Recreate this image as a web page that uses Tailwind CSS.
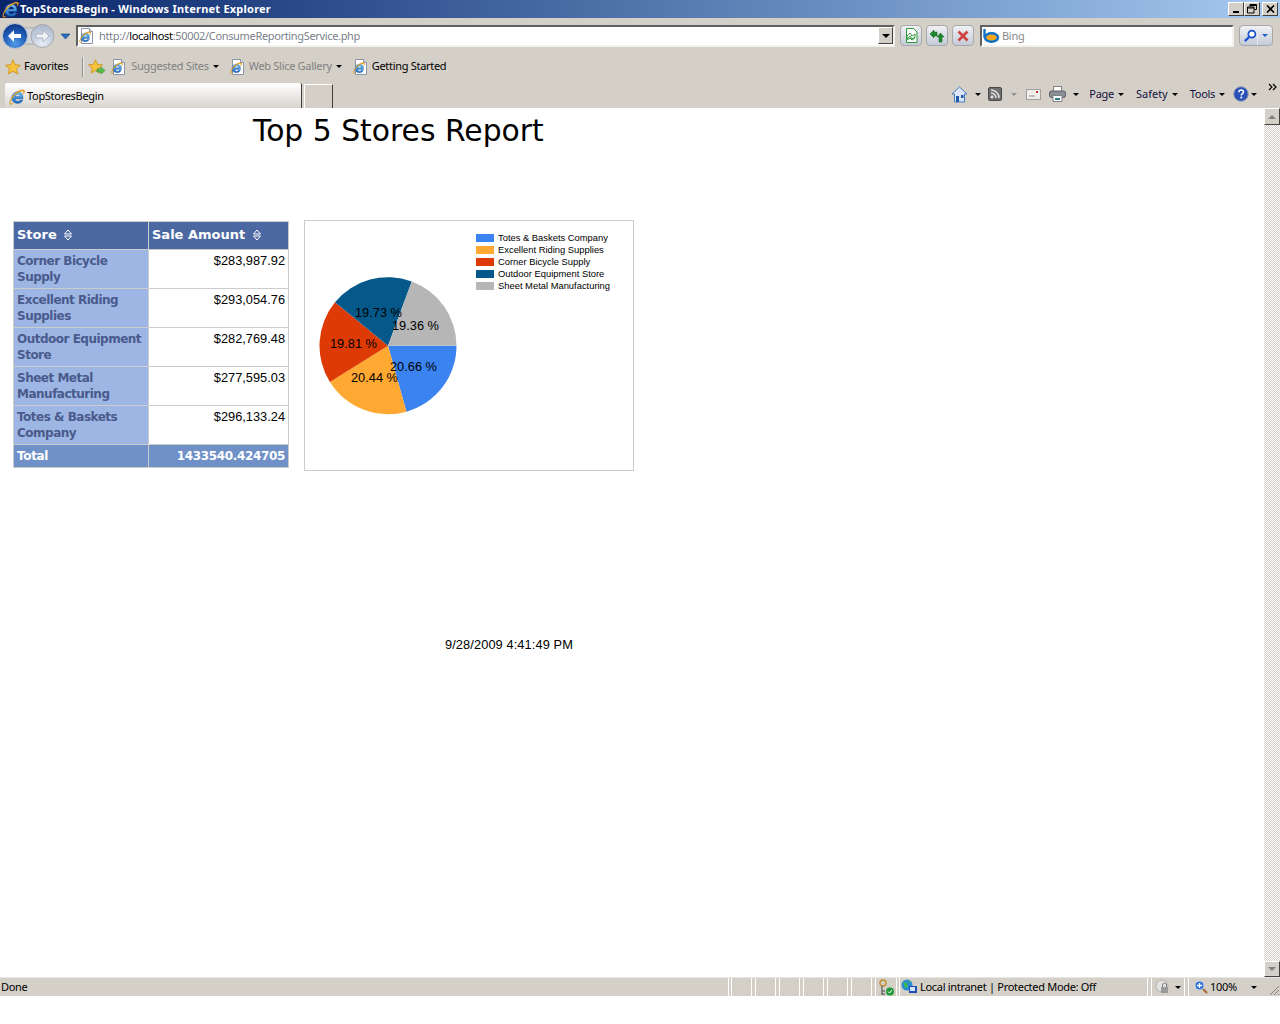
<!DOCTYPE html>
<html><head><meta charset="utf-8"><title>TopStoresBegin</title>
<script src="https://cdn.jsdelivr.net/npm/@tailwindcss/browser@4"></script></head>
<body class="m-0 bg-white overflow-hidden">
<svg class="absolute w-0 h-0" width="0" height="0"><defs>
<linearGradient id="iebl" x1="0" y1="0" x2="0" y2="1"><stop offset="0" stop-color="#7cc4f4"/><stop offset="1" stop-color="#1766c0"/></linearGradient>
<symbol id="ie" viewBox="0 0 16 16">
<path d="M2.800 9.200C2.800 5.400 5.300 2.800 8.700 2.800c3.300 0 5.300 2.500 5.300 5.800v1.300H6.300c.1 1.500 1.200 2.400 2.600 2.400 1 0 1.800-.4 2.200-1.200h2.700c-.7 2-2.500 3.300-4.900 3.300-3.600 0-6.100-2.200-6.100-5.200zM6.400 7.600h4.700c-.1-1.300-1-2.300-2.300-2.300-1.300 0-2.200 1-2.400 2.300z" fill="url(#iebl)" stroke="#0f4a96" stroke-width=".4"/>
<path d="M1 15.300C-.6 13 3.500 5.300 9 2.300c3-1.600 5.900-2 6.600-.7.500.9-.2 2.400-1.500 3.900.4-1.400.6-2.400.1-2.900C13 1.500 9 3 5.800 6.300 2.500 9.600.7 13.500 1.800 14.500c.6.400 1.600.2 2.900-.6-1.500 1.300-3 1.900-3.700 1.400z" fill="#eaa41e" stroke="#b87a10" stroke-width=".2"/>
</symbol>
<symbol id="doc" viewBox="0 0 16 16">
<path d="M2.500.5h8l3 3v12h-11z" fill="#fff" stroke="#8a93a8"/><path d="M10.500.5v3h3" fill="#e4e8f0" stroke="#8a93a8"/>
<use href="#ie" x="0" y="3" width="12" height="12"/>
</symbol>
<symbol id="star" viewBox="0 0 16 16"><path d="M8 .8l2.200 4.900 5.300.6-4 3.500 1.200 5.200L8 12.300 3.300 15l1.200-5.200-4-3.500 5.300-.6z" fill="#f7c33c" stroke="#c98a1a" stroke-width=".8"/></symbol>
<radialGradient id="back" cx=".5" cy=".8" r=".85"><stop offset="0" stop-color="#4f9be8"/><stop offset=".6" stop-color="#1c56b0"/><stop offset="1" stop-color="#0d2f78"/></radialGradient>
<radialGradient id="fwd" cx=".5" cy=".8" r=".85"><stop offset="0" stop-color="#e8eef7"/><stop offset="1" stop-color="#a4b2c9"/></radialGradient>
</defs></svg>

<div class="flex flex-col h-[1024px] w-[1280px] text-[11px] tracking-[-0.3px] text-black [font-family:'Noto_Sans',sans-serif]">
  <!-- title bar -->
  <div class="h-[18px] flex items-center bg-gradient-to-r from-[#0a246a] to-[#a6caf0] pl-[2px] pr-[2px] shrink-0">
    <svg class="w-[17px] h-[17px] shrink-0"><use href="#ie"/></svg>
    <span class="ml-[1px] text-white font-bold text-[11px] tracking-[0.22px]">TopStoresBegin - Windows Internet Explorer</span>
    <div class="ml-auto flex items-center">
      <div class="w-[16px] h-[14px] bg-[#d4d0c8] border border-t-white border-l-white border-r-[#404040] border-b-[#404040] flex items-end justify-center pb-[2px]"><div class="w-[6px] h-[2px] bg-black"></div></div>
      <div class="w-[16px] h-[14px] bg-[#d4d0c8] border border-t-white border-l-white border-r-[#404040] border-b-[#404040] flex items-center justify-center"><svg width="10" height="10" viewBox="0 0 10 10"><path d="M3 .5h6.500v5H7.500M3 .5v2M3 1.500h6.500M.5 3h6.500v6H.5zM.5 4h6.500" fill="none" stroke="#000"/></svg></div>
      <div class="ml-[2px] w-[16px] h-[14px] bg-[#d4d0c8] border border-t-white border-l-white border-r-[#404040] border-b-[#404040] flex items-center justify-center"><svg width="9" height="8" viewBox="0 0 9 8"><path d="M1 .5l7 7M8 .5l-7 7" stroke="#000" stroke-width="1.600"/></svg></div>
    </div>
  </div>

  <!-- address row -->
  <div class="h-[32px] bg-[#d4d0c8] flex items-center shrink-0 pt-[3px]">
    <svg class="ml-[2px] shrink-0" width="72" height="28" viewBox="0 0 72 28">
      <rect x="14" y="6" width="28" height="16" fill="#d0d4dc" stroke="#a8a8a8"/>
      <circle cx="13" cy="14" r="12.500" fill="url(#back)" stroke="#c0c8d8"/>
      <path d="M6 14l6-6v4h7v4h-7v4z" fill="#fff"/>
      <circle cx="40.500" cy="14" r="11.500" fill="url(#fwd)" stroke="#a8a8a8"/>
      <path d="M47 14l-6-6v4h-7v4h7v4z" fill="#eef1f6" stroke="#8b96ab" stroke-width=".6"/>
      <path d="M59 12h9l-4.500 5z" fill="#2a6ac0" stroke="#123f80" stroke-width=".6"/>
    </svg>
    <div class="ml-[2px] w-[819px] h-[22px] bg-white border-2 border-t-[#606060] border-l-[#606060] border-r-[#f4f2ee] border-b-[#f4f2ee] flex items-center">
      <svg class="ml-[1px] w-4 h-4 shrink-0"><use href="#doc"/></svg>
      <span class="ml-[4px] pt-[1px] text-[#7a7f8c] tracking-[-0.34px]">http://<span class="text-black">localhost</span>:50002/ConsumeReportingService.php</span>
      <div class="ml-auto w-[15px] h-[17px] bg-[#d4d0c8] border border-t-white border-l-white border-r-[#404040] border-b-[#404040] flex items-center justify-center"><div class="border-x-[4px] border-x-transparent border-t-[4px] border-t-black"></div></div>
    </div>
    <div class="ml-[5px] w-[22px] h-[21px] rounded-[4px] border border-[#a8a8a8] bg-gradient-to-b from-[#f0f1f4] to-[#c4cbd8] flex items-center justify-center">
      <svg width="13" height="15" viewBox="0 0 13 15"><path d="M1.500.5h7l3.500 3.500v10.500H1.500z" fill="#fff" stroke="#2f9a3c"/><path d="M2 8l3-3 2 3 3-2v3l-3 2-2-3-3 3zM2 12l3-2 2 2 3-2" fill="none" stroke="#2f9a3c"/></svg>
    </div>
    <div class="ml-[4px] w-[22px] h-[21px] rounded-[4px] border border-[#a8a8a8] bg-gradient-to-b from-[#f0f1f4] to-[#c4cbd8] flex items-center justify-center">
      <svg width="16" height="14" viewBox="0 0 16 14"><path d="M1 5l4-4v2h3v4H5v2zM15 8l-3.500-4L8 8h2v5h3V8z" fill="#1f8a2e" stroke="#0f5c1a" stroke-width=".5"/></svg>
    </div>
    <div class="ml-[4px] w-[22px] h-[21px] rounded-[4px] border border-[#a8a8a8] bg-gradient-to-b from-[#f0f1f4] to-[#c4cbd8] flex items-center justify-center">
      <svg width="12" height="12" viewBox="0 0 12 12"><path d="M1.500 1.500l9 9M10.500 1.500l-9 9" stroke="#d0403c" stroke-width="2.600"/></svg>
    </div>
    <div class="ml-[6px] w-[254px] h-[22px] bg-white border-2 border-t-[#606060] border-l-[#606060] border-r-[#f4f2ee] border-b-[#f4f2ee] flex items-center">
      <svg class="ml-[1px] shrink-0" width="17" height="14" viewBox="0 0 17 14"><path d="M1.500 0v9" stroke="#0f72c8" stroke-width="2.400"/><ellipse cx="8.500" cy="8.500" rx="6.500" ry="4.300" fill="#f7a51c" stroke="#0f72c8" stroke-width="2.400"/></svg>
      <span class="ml-[2px] pt-[1px] text-[#8a8a8a]">Bing</span>
    </div>
    <div class="ml-[5px] w-[34px] h-[21px] rounded-[4px] border border-[#a8a8a8] bg-gradient-to-b from-[#f0f1f4] to-[#c4cbd8] flex items-center">
      <svg class="ml-[3px]" width="15" height="14" viewBox="0 0 15 14"><circle cx="9.500" cy="5" r="3.800" fill="#fff" stroke="#1a50d0" stroke-width="1.800"/><path d="M6.500 8L2 12.500" stroke="#1a50d0" stroke-width="2.400"/></svg>
      <div class="ml-auto mr-[4px] pl-[4px] border-l border-[#e8eaef] h-full flex items-center"><div class="border-x-[3px] border-x-transparent border-t-[3px] border-t-[#2060c8]"></div></div>
    </div>
  </div>

  <!-- favorites row -->
  <div class="h-[30px] bg-[#d4d0c8] flex items-center shrink-0 pl-[5px] pt-[3px]">
    <svg class="w-4 h-4 shrink-0"><use href="#star"/></svg>
    <span class="ml-[3px]">Favorites</span>
    <div class="ml-[14px] w-[2px] h-[20px] border-l border-[#909090] bg-white/60"></div>
    <svg class="ml-[4px] shrink-0" width="18" height="16" viewBox="0 0 18 16"><use href="#star" width="15" height="15" x="0" y="0"/><path d="M9 10h4V8l4 3.500L13 15v-2H9z" fill="#5cc04c" stroke="#2e8a2a" stroke-width=".6"/></svg>
    <svg class="ml-[5px] w-4 h-4 shrink-0"><use href="#doc"/></svg>
    <span class="ml-[4px] text-[#808080]">Suggested Sites</span>
    <div class="ml-[4px] border-x-[3px] border-x-transparent border-t-[3px] border-t-black"></div>
    <svg class="ml-[11px] w-4 h-4 shrink-0"><use href="#doc"/></svg>
    <span class="ml-[3px] text-[#808080]">Web Slice Gallery</span>
    <div class="ml-[4px] border-x-[3px] border-x-transparent border-t-[3px] border-t-black"></div>
    <svg class="ml-[11px] w-4 h-4 shrink-0"><use href="#doc"/></svg>
    <span class="ml-[3px]">Getting Started</span>
  </div>

  <!-- tab row -->
  <div class="h-[28px] bg-[#d4d0c8] flex items-end shrink-0 pl-[5px] relative">
    <div class="w-[297px] h-[25px] bg-gradient-to-b from-white to-[#d8d5ce] rounded-t-[2px] flex items-center pl-[4px] pt-[2px] border-r border-[#404040]">
      <svg class="w-4 h-4 shrink-0"><use href="#ie"/></svg>
      <span class="ml-[2px]">TopStoresBegin</span>
    </div>
    <div class="ml-[2px] w-[29px] h-[24px] border-t border-l border-white border-r border-r-[#404040]"></div>
    <div class="ml-auto self-start flex items-center h-[24px] mt-[2px] pr-[23px] text-[#101040]">
      <svg width="17" height="17" viewBox="0 0 17 17"><path d="M8.500 1L1 8h2.500v8h10V8H16z" fill="#dbe6f5" stroke="#4a7cc0"/><path d="M5 10h3v6H5z" fill="#1f5aa8"/><path d="M10 9h2.500v3H10z" fill="#1f5aa8"/></svg>
      <div class="ml-[7px] border-x-[3px] border-x-transparent border-t-[3px] border-t-black"></div>
      <svg class="ml-[7px]" width="14" height="14" viewBox="0 0 14 14"><rect x=".5" y=".5" width="13" height="13" rx="1.500" fill="#6e6e6e" stroke="#4a4a4a"/><circle cx="4" cy="10" r="1.400" fill="#e8e8e8"/><path d="M3 6a5 5 0 015 5M3 3a8 8 0 018 8" fill="none" stroke="#e8e8e8" stroke-width="1.400"/></svg>
      <div class="ml-[9px] border-x-[3px] border-x-transparent border-t-[3px] border-t-[#909090]"></div>
      <svg class="ml-[9px]" width="15" height="11" viewBox="0 0 15 11"><rect x=".5" y=".5" width="14" height="10" fill="#f0eeea" stroke="#a0a0a0"/><path d="M3 7h6" stroke="#909090"/><rect x="10" y="2" width="2" height="2" fill="#d03030"/></svg>
      <svg class="ml-[8px]" width="17" height="16" viewBox="0 0 17 16"><path d="M4.500 5V.5h8V5" fill="#fff" stroke="#808080"/><rect x=".5" y="5" width="16" height="6.500" rx="2" fill="#8a8f96" stroke="#5a5f66"/><path d="M4 9.500h9v6H4z" fill="#fff" stroke="#808080"/><rect x="6" y="12" width="5" height="2" fill="#2a7a8a"/></svg>
      <div class="ml-[7px] border-x-[3px] border-x-transparent border-t-[3px] border-t-black"></div>
      <span class="ml-[10px]">Page</span>
      <div class="ml-[4px] border-x-[3px] border-x-transparent border-t-[3px] border-t-black"></div>
      <span class="ml-[12px] tracking-normal">Safety</span>
      <div class="ml-[4px] border-x-[3px] border-x-transparent border-t-[3px] border-t-black"></div>
      <span class="ml-[12px]">Tools</span>
      <div class="ml-[4px] border-x-[3px] border-x-transparent border-t-[3px] border-t-black"></div>
      <svg class="ml-[8px]" width="16" height="16" viewBox="0 0 16 16"><circle cx="8" cy="8" r="7.300" fill="#2850b8" stroke="#9aa0b0"/><path d="M5.800 6.200C5.900 4.800 6.900 4 8.200 4c1.300 0 2.300.8 2.300 2 0 1.700-2.200 1.700-2.200 3.400" fill="none" stroke="#fff" stroke-width="1.500"/><rect x="7.400" y="10.600" width="1.800" height="1.800" fill="#fff"/></svg>
      <div class="ml-[2px] border-x-[3px] border-x-transparent border-t-[3px] border-t-black"></div>
    </div>
    <svg class="absolute right-[3px] top-[3px]" width="9" height="8" viewBox="0 0 9 8"><path d="M1 1l3 3-3 3M5 1l3 3-3 3" fill="none" stroke="#000" stroke-width="1.200"/></svg>
  </div>

  <!-- content + scrollbar -->
  <div class="flex-1 min-h-0 flex tracking-normal">
    <main class="flex-1 min-w-0 bg-white">
      <h1 class="ml-[253px] mt-[3px] text-[29.8px] leading-[40px] font-normal [font-family:'DejaVu_Sans',sans-serif]">Top 5 Stores Report</h1>
      <div class="mt-[70px] ml-[13px] flex items-start">
        <table class="border-collapse w-[276px] [font-family:'Liberation_Sans',sans-serif] text-[12.8px]">
          <thead>
            <tr class="h-[28px] bg-[#4c68a3] text-white text-[13px] font-bold [font-family:'DejaVu_Sans',sans-serif]">
              <th class="w-[135px] border border-[#cccccc] text-left font-bold px-[3px] pb-[2px]">Store <svg class="inline -mt-[1px] ml-[3px]" width="8" height="12" viewBox="0 0 8 12"><path d="M.5 5L4 1l3.500 4zM.5 7L4 11l3.500-4z" fill="none" stroke="#fff"/></svg></th>
              <th class="border border-[#cccccc] text-left font-bold px-[3px] pb-[2px]">Sale Amount <svg class="inline -mt-[1px] ml-[3px]" width="8" height="12" viewBox="0 0 8 12"><path d="M.5 5L4 1l3.500 4zM.5 7L4 11l3.500-4z" fill="none" stroke="#fff"/></svg></th>
            </tr>
          </thead>
          <tbody>
            <tr class="h-[39px]"><td class="border border-[#cccccc] bg-[#9db6e3] text-[#4a5a8c] font-bold text-[12px] tracking-[-0.5px] leading-[16px] px-[3px] align-top pt-[3px] [font-family:'DejaVu_Sans',sans-serif]">Corner Bicycle Supply</td><td class="border border-[#cccccc] text-right align-top px-[3px] pt-[1px]">$283,987.92</td></tr>
            <tr class="h-[39px]"><td class="border border-[#cccccc] bg-[#9db6e3] text-[#4a5a8c] font-bold text-[12px] tracking-[-0.5px] leading-[16px] px-[3px] align-top pt-[3px] [font-family:'DejaVu_Sans',sans-serif]">Excellent Riding Supplies</td><td class="border border-[#cccccc] text-right align-top px-[3px] pt-[1px]">$293,054.76</td></tr>
            <tr class="h-[39px]"><td class="border border-[#cccccc] bg-[#9db6e3] text-[#4a5a8c] font-bold text-[12px] tracking-[-0.5px] leading-[16px] px-[3px] align-top pt-[3px] [font-family:'DejaVu_Sans',sans-serif]">Outdoor Equipment Store</td><td class="border border-[#cccccc] text-right align-top px-[3px] pt-[1px]">$282,769.48</td></tr>
            <tr class="h-[39px]"><td class="border border-[#cccccc] bg-[#9db6e3] text-[#4a5a8c] font-bold text-[12px] tracking-[-0.5px] leading-[16px] px-[3px] align-top pt-[3px] [font-family:'DejaVu_Sans',sans-serif]">Sheet Metal Manufacturing</td><td class="border border-[#cccccc] text-right align-top px-[3px] pt-[1px]">$277,595.03</td></tr>
            <tr class="h-[39px]"><td class="border border-[#cccccc] bg-[#9db6e3] text-[#4a5a8c] font-bold text-[12px] tracking-[-0.5px] leading-[16px] px-[3px] align-top pt-[3px] [font-family:'DejaVu_Sans',sans-serif]">Totes &amp; Baskets Company</td><td class="border border-[#cccccc] text-right align-top px-[3px] pt-[1px]">$296,133.24</td></tr>
            <tr class="h-[23px] bg-[#7090c8] text-white font-bold text-[12px] tracking-[-0.35px] [font-family:'DejaVu_Sans',sans-serif]"><td class="border border-[#cccccc] px-[3px]">Total</td><td class="border border-[#cccccc] text-right px-[3px]">1433540.424705</td></tr>
          </tbody>
        </table>
        <div class="ml-[15px] -mt-[1px] w-[330px] h-[251px] border border-[#cccccc] bg-white relative [font-family:'Liberation_Sans',sans-serif]">
          <svg class="absolute left-0 top-0" width="328" height="249" viewBox="0 0 328 249">
            <g transform="translate(83 124.700)">
              <path d="M0 0H68.500A68.500 68.500 0 0 1 18.450 65.970Z" fill="#3a83f0"/>
              <path d="M0 0L18.450 65.970A68.500 68.500 0 0 1 -58.060 36.350Z" fill="#ffa832"/>
              <path d="M0 0L-58.060 36.350A68.500 68.500 0 0 1 -53.030 -43.360Z" fill="#dd3a06"/>
              <path d="M0 0L-53.030 -43.360A68.500 68.500 0 0 1 23.770 -64.240Z" fill="#05598a"/>
              <path d="M0 0L23.770 -64.240A68.500 68.500 0 0 1 68.500 0Z" fill="#b6b6b6"/>
            </g>
            <g font-size="12.800" fill="#000" font-family="Liberation Sans">
              <text x="50" y="96">19.73 %</text>
              <text x="87" y="109">19.36 %</text>
              <text x="25" y="127">19.81 %</text>
              <text x="85" y="150">20.66 %</text>
              <text x="46" y="161">20.44 %</text>
            </g>
            <rect x="171" y="13" width="18" height="8" fill="#3a83f0"/>
            <rect x="171" y="25" width="18" height="8" fill="#ffa832"/>
            <rect x="171" y="37" width="18" height="8" fill="#dd3a06"/>
            <rect x="171" y="49" width="18" height="8" fill="#05598a"/>
            <rect x="171" y="61" width="18" height="8" fill="#b6b6b6"/>
            <g font-size="9.400" fill="#000" font-family="Liberation Sans">
              <text x="193" y="20">Totes &amp; Baskets Company</text>
              <text x="193" y="32">Excellent Riding Supplies</text>
              <text x="193" y="44">Corner Bicycle Supply</text>
              <text x="193" y="56">Outdoor Equipment Store</text>
              <text x="193" y="68">Sheet Metal Manufacturing</text>
            </g>
          </svg>
        </div>
      </div>
      <p class="ml-[445px] mt-[166px] [font-family:'Liberation_Sans',sans-serif] text-[12.8px] tracking-[0.1px] leading-[16px]">9/28/2009 4:41:49 PM</p>
    </main>
    <div class="w-[16px] flex flex-col bg-[repeating-conic-gradient(#d4d0c8_0_25%,#ffffff_0_50%)] bg-[length:2px_2px]">
      <div class="h-[17px] bg-[#d4d0c8] border border-t-white border-l-white border-r-[#404040] border-b-[#404040] flex items-center justify-center"><div class="border-x-[4px] border-x-transparent border-b-[4px] border-b-[#808080]"></div></div>
      <div class="flex-1"></div>
      <div class="h-[16px] bg-[#d4d0c8] border border-t-white border-l-white border-r-[#404040] border-b-[#404040] flex items-center justify-center"><div class="border-x-[4px] border-x-transparent border-t-[4px] border-t-[#808080]"></div></div>
    </div>
  </div>

  <!-- status bar -->
  <div class="h-[20px] bg-[#d4d0c8] flex items-center shrink-0 border-t border-[#e8e6e2] border-b border-b-white">
    <span class="pl-[1px] w-[729px] h-full leading-[18px] border-r border-white">Done</span>
    <div class="ml-[2px] w-[21px] h-full border-x border-white"></div>
    <div class="ml-[3px] w-[21px] h-full border-x border-white"></div>
    <div class="ml-[3px] w-[21px] h-full border-x border-white"></div>
    <div class="ml-[3px] w-[21px] h-full border-x border-white"></div>
    <div class="ml-[3px] w-[21px] h-full border-x border-white"></div>
    <div class="ml-[3px] w-[21px] h-full border-x border-white"></div>
    <div class="ml-[3px] w-[22px] h-full border-x border-white flex items-center justify-center">
      <svg width="18" height="17" viewBox="0 0 18 17"><circle cx="6" cy="4" r="3" fill="none" stroke="#c09030" stroke-width="1.400"/><path d="M5 7v9M5 12h3M5 15h3" stroke="#707070" stroke-width="1.500"/><circle cx="13" cy="12.500" r="4" fill="#1f9a3a"/><path d="M11 12.500l1.500 1.500 2.500-3" fill="none" stroke="#fff"/></svg>
    </div>
    <div class="ml-[2px] w-[249px] h-full border-x border-white flex items-center">
      <svg width="18" height="17" viewBox="0 0 18 17"><circle cx="7" cy="6" r="5.500" fill="#2a8ad8"/><path d="M3 3l4 1 1 4-3 1zM8 1l3 2-2 1z" fill="#3cb84a"/><rect x="9" y="7" width="8" height="7" fill="#1f4fb0"/><rect x="10" y="8" width="5" height="4" fill="#cfe3ff"/></svg>
      <span class="ml-[2px]">Local intranet | Protected Mode: Off</span>
    </div>
    <div class="ml-[3px] w-[34px] h-full border-x border-white flex items-center pl-[2px]">
      <svg width="16" height="16" viewBox="0 0 16 16"><circle cx="8" cy="7" r="6" fill="#e4e4e4" stroke="#b0b0b0"/><rect x="7" y="8" width="7" height="6" fill="#9a9a9a"/><path d="M8.500 8V6a2 2 0 014 0v2" fill="none" stroke="#808080"/></svg>
      <div class="ml-[5px] border-x-[3px] border-x-transparent border-t-[3px] border-t-black"></div>
    </div>
    <div class="ml-[3px] flex-1 h-full border-l border-white flex items-center pl-[5px] relative">
      <svg width="14" height="14" viewBox="0 0 14 14"><circle cx="5.500" cy="5.500" r="4.500" fill="#2f6fd8" stroke="#d0d8e8"/><path d="M3 5.500h5M5.500 3v5" stroke="#fff" stroke-width="1.300"/><path d="M9 9l4 4" stroke="#a06a30" stroke-width="2"/></svg>
      <span class="ml-[2px]">100%</span>
      <div class="ml-[14px] border-x-[3px] border-x-transparent border-t-[3px] border-t-black"></div>
      <svg class="absolute right-[0px] bottom-0" width="12" height="12" viewBox="0 0 12 12"><path d="M11 2L2 11M11 6l-5 5M11 10l-1 1" stroke="#808080"/></svg>
    </div>
  </div>
  <div class="h-[27px] bg-white shrink-0"></div>
</div>
</body></html>
